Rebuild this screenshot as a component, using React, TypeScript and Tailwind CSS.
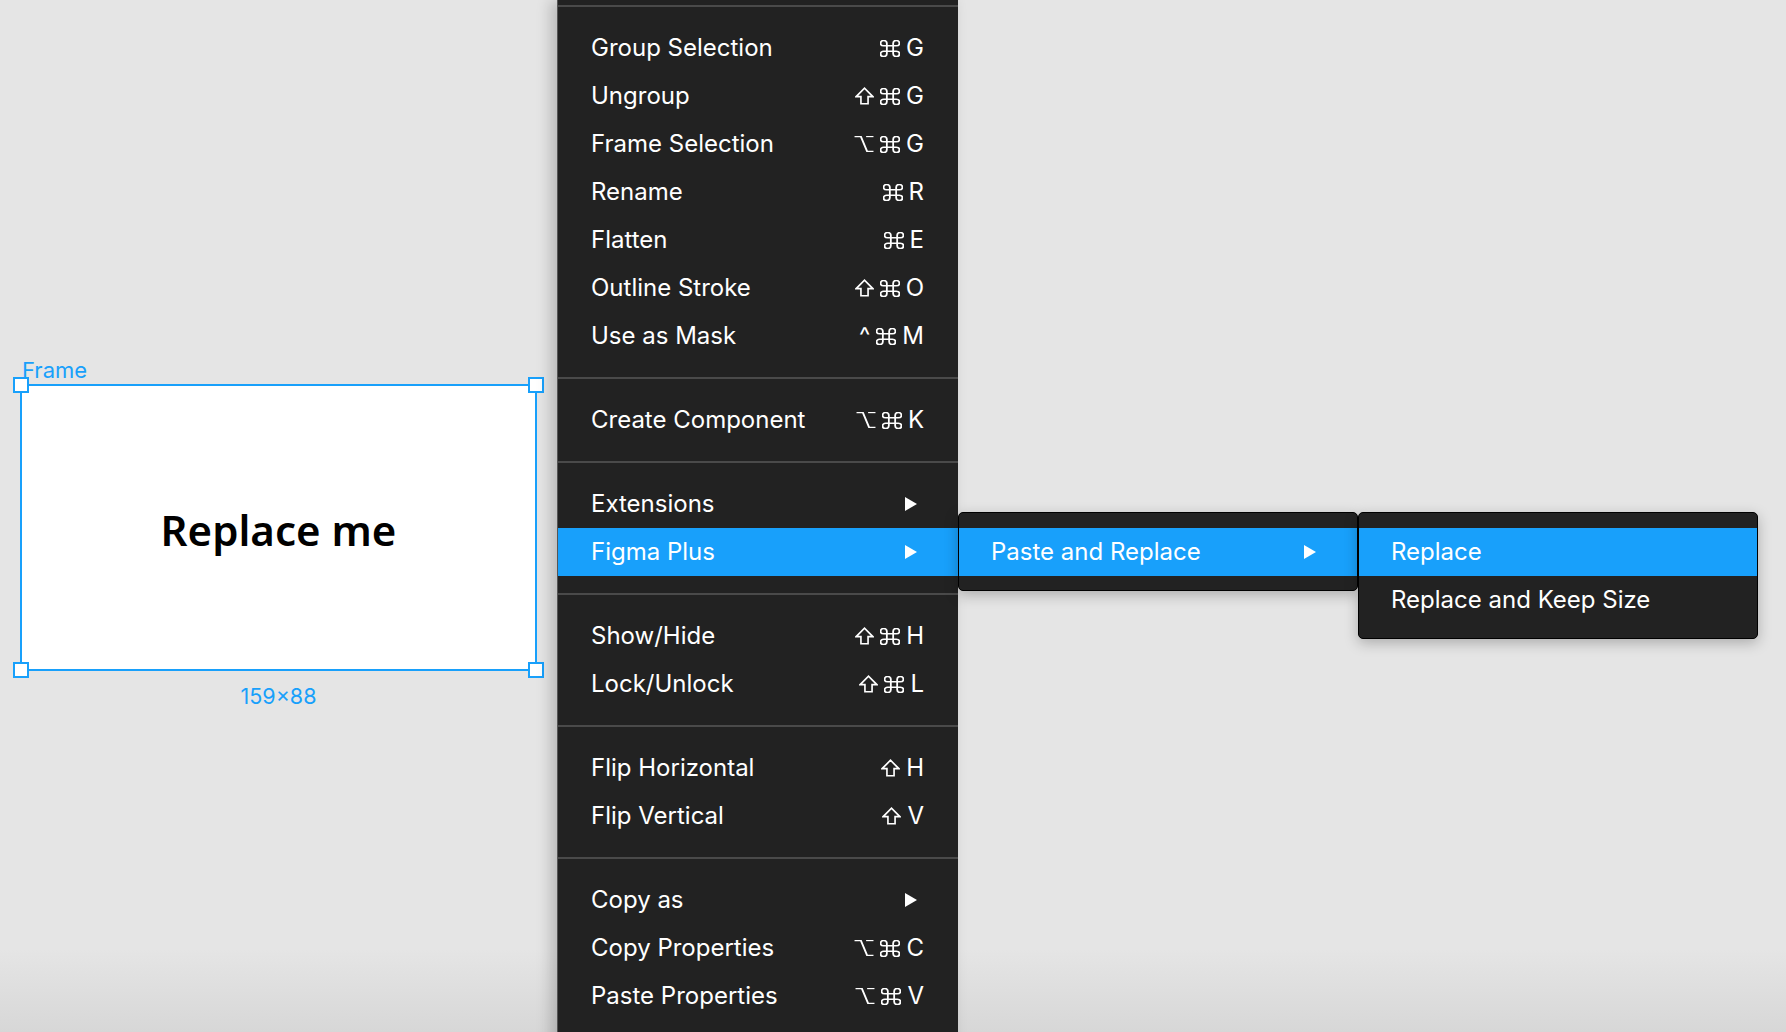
import React from 'react';

type Item = { label: string; keys?: string[]; sub?: boolean; active?: boolean };

const sections: Item[][] = [
    [
        { label: 'Group Selection', keys: ['cmd', 'G'] },
        { label: 'Ungroup', keys: ['shift', 'cmd', 'G'] },
        { label: 'Frame Selection', keys: ['opt', 'cmd', 'G'] },
        { label: 'Rename', keys: ['cmd', 'R'] },
        { label: 'Flatten', keys: ['cmd', 'E'] },
        { label: 'Outline Stroke', keys: ['shift', 'cmd', 'O'] },
        { label: 'Use as Mask', keys: ['^', 'cmd', 'M'] },
    ],
    [{ label: 'Create Component', keys: ['opt', 'cmd', 'K'] }],
    [
        { label: 'Extensions', sub: true },
        { label: 'Figma Plus', sub: true, active: true },
    ],
    [
        { label: 'Show/Hide', keys: ['shift', 'cmd', 'H'] },
        { label: 'Lock/Unlock', keys: ['shift', 'cmd', 'L'] },
    ],
    [
        { label: 'Flip Horizontal', keys: ['shift', 'H'] },
        { label: 'Flip Vertical', keys: ['shift', 'V'] },
    ],
    [
        { label: 'Copy as', sub: true },
        { label: 'Copy Properties', keys: ['opt', 'cmd', 'C'] },
        { label: 'Paste Properties', keys: ['opt', 'cmd', 'V'] },
    ],
];

const Arrow = () => (
    <svg width="12" height="14" viewBox="0 0 12 14" className="shrink-0">
        <path d="M0 0 L12 7 L0 14 Z" fill="#ffffff" />
    </svg>
);

// modifier key glyphs
const CmdIcon = () => (
    <svg width="20" height="17" viewBox="2.5 2.5 19 19" preserveAspectRatio="none" fill="none" stroke="#fff" strokeWidth="1.7">
        <path d="M15 6v12a3 3 0 1 0 3-3H6a3 3 0 1 0 3 3V6a3 3 0 1 0-3 3h12a3 3 0 1 0-3-3" />
    </svg>
);

const ShiftIcon = () => (
    <svg width="19" height="18" viewBox="4 4 16 15" fill="none" stroke="#fff" strokeWidth="1.4" strokeLinejoin="miter">
        <path d="M9 18v-6H5l7-7 7 7h-4v6H9z" />
    </svg>
);

const OptIcon = () => (
    <svg width="20" height="16" viewBox="2.5 2.5 19 19" preserveAspectRatio="none" fill="none" stroke="#fff" strokeWidth="1.8">
        <path d="M3 3h6l6 18h6" />
        <path d="M14 3h7" />
    </svg>
);

const Shortcut = ({ keys }: { keys: string[] }) => (
    <div className="flex items-center gap-[6px]">
        {keys.map((k, i) => {
            if (k === 'cmd') return <CmdIcon key={i} />;
            if (k === 'shift') return <ShiftIcon key={i} />;
            if (k === 'opt') return <OptIcon key={i} />;
            return (
                <span key={i} className="text-[24px] leading-none">{k}</span>
            );
        })}
    </div>
);

const Separator = () => <div className="my-[17px] h-[2px] bg-[#4a4a4a]" />;

const SubMenus = () => (
    <div className="absolute left-full top-[-16px] z-10 w-[400px] rounded-[5px] border border-black bg-[#222222] pt-[15px] pb-[14px] shadow-[0_4px_14px_rgba(0,0,0,0.25)]">
        <div className="relative flex h-[48px] items-center justify-between bg-[#18a0fb] pl-[32px] pr-[41px]">
            <span>Paste and Replace</span>
            <Arrow />
            <div className="absolute left-[calc(100%+1px)] top-[-16px] w-[400px] rounded-[5px] border border-black bg-[#222222] pt-[15px] pb-[14px] shadow-[0_4px_14px_rgba(0,0,0,0.25)]">
                <div className="flex h-[48px] items-center bg-[#18a0fb] pl-[32px]">Replace</div>
                <div className="flex h-[48px] items-center pl-[32px]">Replace and Keep Size</div>
            </div>
        </div>
    </div>
);

export default function App() {
    return (
        <div className="flex h-[1032px] w-[1786px] overflow-hidden bg-[linear-gradient(to_bottom,#e5e5e5_92%,#d7d7d7)] font-['Inter',sans-serif]">
            {/* Canvas with selected frame */}
            <div className="w-[557px] shrink-0 pl-[20px] pt-[356px]">
                <div className="pl-[2px] text-[22px] leading-[28px] text-[#18a0fb]">Frame</div>
                <div className="relative flex h-[287px] w-[517px] items-center justify-center border-2 border-[#18a0fb] bg-white">
                    <span className="mt-[4px] font-['Noto_Sans',sans-serif] text-[42px] font-semibold text-black">Replace me</span>
                    <div className="absolute left-[-9px] top-[-9px] h-[16px] w-[16px] border-2 border-[#18a0fb] bg-white" />
                    <div className="absolute right-[-9px] top-[-9px] h-[16px] w-[16px] border-2 border-[#18a0fb] bg-white" />
                    <div className="absolute bottom-[-9px] left-[-9px] h-[16px] w-[16px] border-2 border-[#18a0fb] bg-white" />
                    <div className="absolute bottom-[-9px] right-[-9px] h-[16px] w-[16px] border-2 border-[#18a0fb] bg-white" />
                </div>
                <div className="mt-[9px] w-[517px] text-center text-[21.5px] text-[#18a0fb]">159×88</div>
            </div>

            {/* Context menu */}
            <div className="relative w-[401px] shrink-0 self-start border-l border-[#555] bg-[#222222] pt-[5px] text-[24px] text-white shadow-[-6px_0_14px_rgba(0,0,0,0.2)]">
                <div className="h-[2px] bg-[#4a4a4a]" />
                {sections.map((items, si) => (
                    <div key={si}>
                        {si > 0 && <Separator />}
                        {si === 0 && <div className="h-[17px]" />}
                        {items.map((it) => (
                            <div
                                key={it.label}
                                className={
                                    'relative flex h-[48px] items-center justify-between pl-[33px] ' +
                                    (it.sub ? 'pr-[41px] ' : 'pr-[34px] ') +
                                    (it.active ? 'bg-[#18a0fb]' : '')
                                }
                            >
                                <span>{it.label}</span>
                                {it.keys && <Shortcut keys={it.keys} />}
                                {it.sub && <Arrow />}
                                {it.active && <SubMenus />}
                            </div>
                        ))}
                    </div>
                ))}
                <div className="h-[40px]" />
            </div>
        </div>
    );
}
